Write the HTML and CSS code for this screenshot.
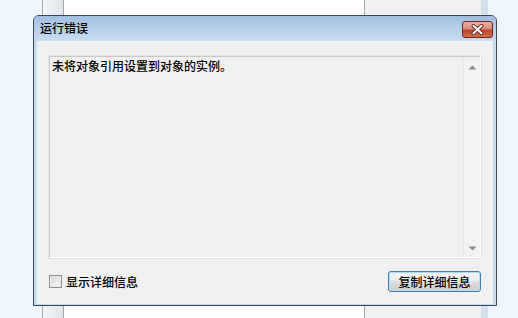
FILE: index.html
```html
<!DOCTYPE html>
<html lang="zh">
<head>
<meta charset="utf-8">
<link rel="stylesheet" href="styles.css">
</head>
<body>
<div class="desk">
  <div class="bg-edge"></div>
  <div class="bg-col-a"></div>
  <div class="bg-white"></div>
  <div class="bg-col-b"></div>
  <div class="bg-strip"></div>
  <div class="bg-edge-r"></div>
</div>
<div class="dialog">
  <div class="titlebar">
    <span class="title">运行错误</span>
    <div class="close">
      <svg width="15" height="11" viewBox="0 0 15 11">
        <path d="M3.5 1.8 L11.5 9.2 M11.5 1.8 L3.5 9.2" stroke="#5a1a10" stroke-width="3.8" stroke-linecap="round"/>
        <path d="M3.5 1.8 L11.5 9.2 M11.5 1.8 L3.5 9.2" stroke="#ffffff" stroke-width="2.2" stroke-linecap="round"/>
      </svg>
    </div>
  </div>
  <div class="client">
    <div class="textbox">
      <div class="msg">未将对象引用设置到对象的实例。</div>
      <div class="vscroll">
        <svg class="arr" width="9" height="5" viewBox="0 0 9 5"><path d="M0.5 4.5 L4.5 0.5 L8.5 4.5 Z" fill="#8a8a8a"/></svg>
        <svg class="arr" width="9" height="5" viewBox="0 0 9 5"><path d="M0.5 0.5 L4.5 4.5 L8.5 0.5 Z" fill="#8a8a8a"/></svg>
      </div>
    </div>
    <div class="footer">
      <label class="chk"><span class="box"></span><span>显示详细信息</span></label>
      <div class="btn">复制详细信息</div>
    </div>
  </div>
</div>
</body>
</html>
```
FILE: styles.css
```css
html, body {
  margin: 0;
  padding: 0;
}
body {
  width: 518px;
  height: 318px;
  overflow: hidden;
  position: relative;
  font-family: "Noto Sans CJK SC", "Noto Sans", sans-serif;
  font-size: 12px;
  font-weight: 500;
  color: #000;
  background: #eef5fc;
}
.desk {
  display: flex;
  height: 318px;
}
.bg-edge { width: 42px; background: #eef5fc; }
.bg-col-a {
  width: 20px;
  border-left: 1px solid #a3a7ad;
  border-right: 1px solid #a3a7ad;
  background: linear-gradient(90deg, #f3f5f8, #e1e5ea);
}
.bg-white { width: 300px; background: #ffffff; }
.bg-col-b {
  width: 116px;
  border-left: 1px solid #a3a7ad;
  background: #f0f0f0;
}
.bg-strip { width: 7px; background: #d3e0ee; }
.bg-edge-r { flex: 1; background: #eef5fc; }

.dialog {
  position: absolute;
  left: 33px;
  top: 15px;
  width: 462px;
  height: 289px;
  border: 1px solid #384858;
  border-radius: 6px 6px 0 0;
  background: #c6dcf1;
  display: flex;
  flex-direction: column;
}
.titlebar {
  height: 25px;
  flex: none;
  display: flex;
  align-items: center;
  justify-content: space-between;
  padding: 0 3px 0 6px;
  border-radius: 5px 5px 0 0;
  background: linear-gradient(180deg, #a2bedf 0%, #b6cee9 50%, #cadcf0 100%);
}
.title {
  font-size: 12px;
  line-height: 14px;
  color: #000;
  margin-top: -1px;
}
.close {
  width: 29px;
  height: 15px;
  margin-top: 2px;
  border: 1px solid #6b2418;
  border-radius: 3px;
  background: linear-gradient(180deg, #eab0a2 0%, #d98a77 45%, #c2432b 55%, #d0714f 100%);
  display: flex;
  align-items: center;
  justify-content: center;
}
.client {
  flex: 1;
  margin: 0 3px 2px 3px;
  background: #f0f0f0;
  display: flex;
  flex-direction: column;
  padding: 15px 12px 12px 12px;
}
.textbox {
  height: 200px;
  border: 1px solid #c9c9c9;
  border-right-color: #ffffff;
  border-bottom-color: #ffffff;
  box-shadow: 0 0 0 1px #e3e3e3;
  background: #f0f0f0;
  display: flex;
}
.msg {
  flex: 1;
  padding: 2px 0 0 2px;
  line-height: 14px;
}
.vscroll {
  width: 16px;
  background: #f2f2f2;
  border-left: 1px solid #e8e8e8;
  display: flex;
  flex-direction: column;
  justify-content: space-between;
  align-items: center;
  padding: 8px 0 6px 0;
}
.arr { display: block; }
.footer {
  margin-top: 13px;
  display: flex;
  justify-content: space-between;
  align-items: center;
}
.chk {
  display: flex;
  align-items: center;
  gap: 4px;
}
.box {
  width: 11px;
  height: 11px;
  border: 1px solid #8e8f8f;
  background: linear-gradient(135deg, #d8d8d8, #f4f4f4);
  box-shadow: inset 0 0 0 1px #e8e8e8;
}
.btn {
  width: 91px;
  height: 19px;
  border: 1px solid #3c7fb1;
  border-radius: 3px;
  box-shadow: inset 0 0 0 1px #aadcf5;
  background: linear-gradient(180deg, #f4f4f4 0%, #ebebeb 48%, #dddddd 52%, #cfcfcf 100%);
  display: flex;
  align-items: center;
  justify-content: center;
  font-size: 12px;
  line-height: 14px;
}
```
